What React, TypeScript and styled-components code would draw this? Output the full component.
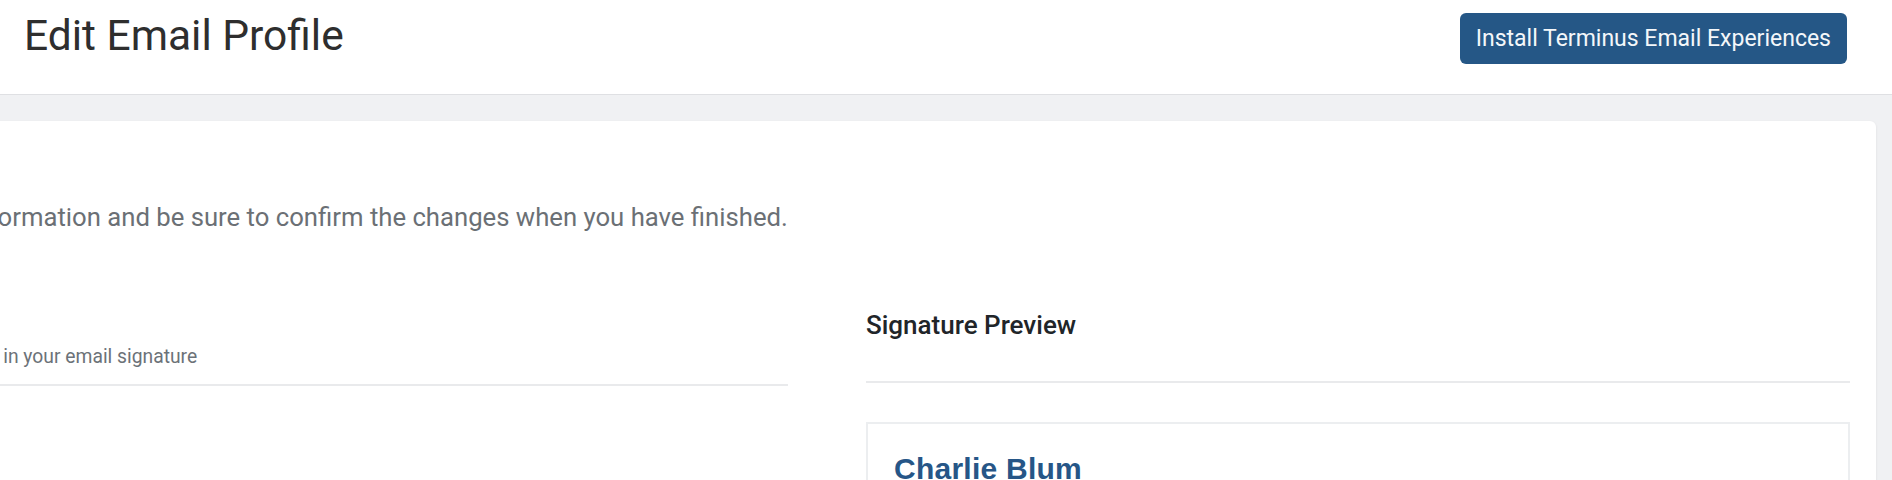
import styled, { createGlobalStyle } from "styled-components";

const GlobalStyle = createGlobalStyle`
  html, body {
    margin: 0;
    padding: 0;
    background: #f0f1f3;
    font-family: Roboto, "Liberation Sans", sans-serif;
    overflow: hidden;
  }
  * {
    box-sizing: border-box;
  }
`;

const App = () => {
  return (
    <>
      <GlobalStyle />
      <Page>
        <Header>
          <Title>Edit Email Profile</Title>
          <InstallBtn>Install Terminus Email Experiences</InstallBtn>
        </Header>
        <Content>
          <Card>
            <Intro>
              Set the profile information and be sure to confirm the changes
              when you have finished.
            </Intro>
            <Columns>
              <Column>
                <ColumnHead>
                  <ColumnTitle>Details</ColumnTitle>
                  <ColumnHint>Information for display in your email signature</ColumnHint>
                </ColumnHead>
              </Column>
              <Column>
                <ColumnHead>
                  <ColumnTitle>Signature Preview</ColumnTitle>
                </ColumnHead>
                <PreviewBox>
                  <SigName>Charlie Blum</SigName>
                </PreviewBox>
              </Column>
            </Columns>
          </Card>
        </Content>
      </Page>
    </>
  );
};

export default App;

const Page = styled.div`
  width: 1892px;
  min-height: 480px;
`;

const Header = styled.header`
  height: 95px;
  background: #ffffff;
  border-bottom: 1px solid #dfe0e3;
  display: flex;
  align-items: center;
  justify-content: space-between;
  padding: 0 45px 18px 24px;
`;

const Title = styled.h1`
  margin: 0 0 5px;
  font-size: 42.5px;
  font-weight: 400;
  color: #2e2e2e;
`;

const InstallBtn = styled.button`
  height: 51px;
  padding: 0 16px;
  border: none;
  border-radius: 6px;
  background: #255786;
  color: #f4f7fa;
  font-family: Roboto, sans-serif;
  font-size: 23px;
  font-weight: 400;
`;

const Content = styled.main`
  padding: 26px 16px 0 0;
  overflow: hidden;
`;

const Card = styled.section`
  margin-left: -222px;
  background: #ffffff;
  border-radius: 6px;
  box-shadow: 0 1px 3px rgba(0, 0, 0, 0.08);
  padding: 77px 26px 40px 26px;
`;

const Intro = styled.p`
  margin: 0 0 74px;
  font-size: 25.7px;
  line-height: 38px;
  color: #6b7075;
`;

const Columns = styled.div`
  display: grid;
  grid-template-columns: 1fr 1fr;
  column-gap: 78px;
  align-items: start;
`;

const Column = styled.div`
  display: flex;
  flex-direction: column;
`;

const ColumnHead = styled.div`
  min-height: 73px;
  border-bottom: 2px solid #e9eaec;
  padding-bottom: 14px;
`;

const ColumnTitle = styled.h3`
  margin: 0;
  font-size: 26px;
  font-weight: 500;
  line-height: 30px;
  color: #212529;
`;

const ColumnHint = styled.p`
  margin: 4px 0 0;
  font-size: 19.3px;
  line-height: 26px;
  color: #6c7278;
`;

const PreviewBox = styled.div`
  margin-top: 39px;
  border: 2px solid #eceef0;
  padding: 28px 26px;
`;

const SigName = styled.div`
  font-family: "Liberation Sans", Arial, sans-serif;
  font-weight: 700;
  font-size: 30px;
  letter-spacing: 0.25px;
  color: #265687;
`;
